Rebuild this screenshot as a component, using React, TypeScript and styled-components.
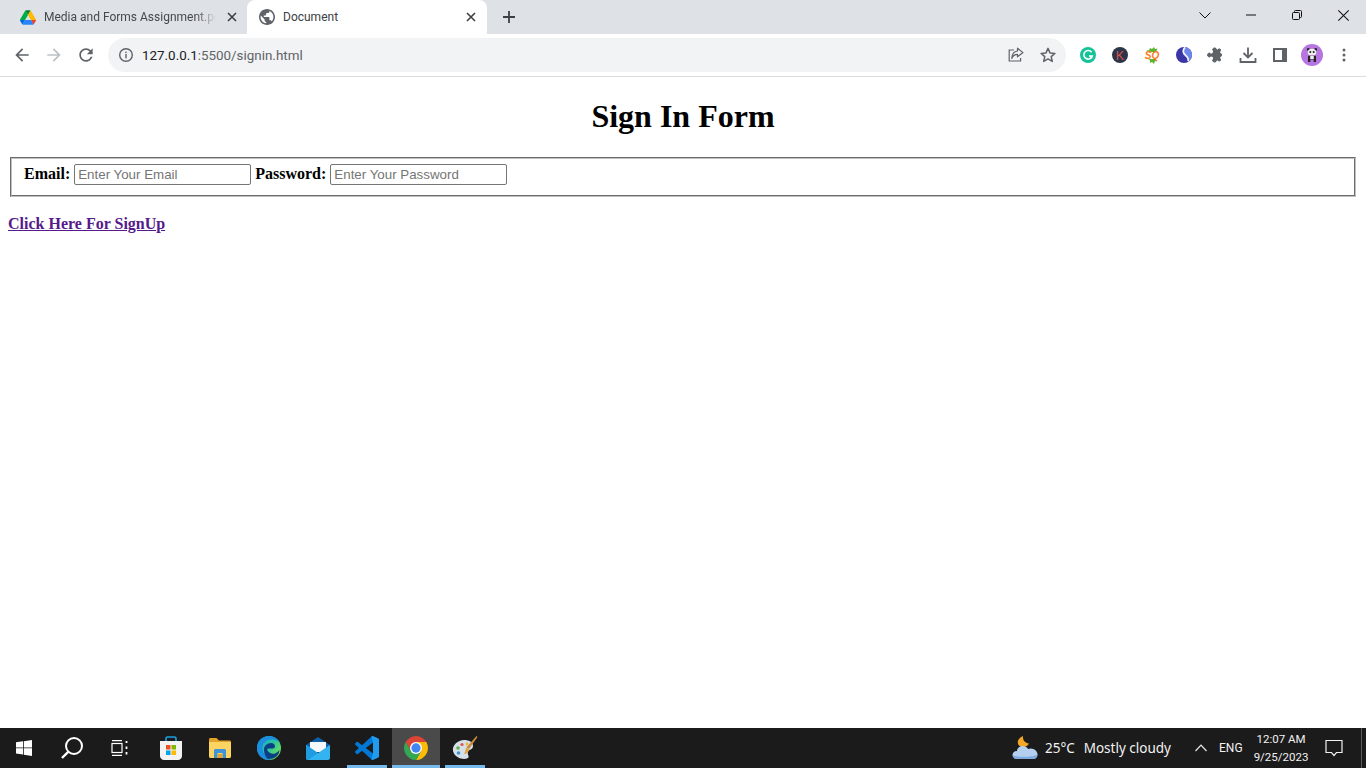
import React from "react";
import styled, { createGlobalStyle } from "styled-components";

const Global = createGlobalStyle`
  html, body { margin: 0; padding: 0; height: 100%; overflow: hidden; background: #fff; }
  #root { height: 100%; }
`;
const UI = `"Noto Sans", "Open Sans", sans-serif`;
const NARROW = `Roboto, "Noto Sans", sans-serif`;

const Shell = styled.div`display: flex; flex-direction: column; height: 768px; width: 1366px;`;
const TabStrip = styled.div`display: flex; align-items: flex-end; height: 34px; background: #dee1e6; padding-left: 8px; flex: none;`;
const Tab = styled.div<{ $active?: boolean }>`
  position: relative; display: flex; align-items: center; height: 34px; flex: none;
  width: ${p => (p.$active ? "240px" : "239px")};
  padding: 0 ${p => (p.$active ? "8px" : "7px")} 0 12px;
  box-sizing: border-box;
  background: ${p => (p.$active ? "#fff" : "transparent")};
  border-radius: 8px 8px 0 0;
  color: ${p => (p.$active ? "#3c4043" : "#45494e")};
  font: 12px ${NARROW};
`;
const TabIcon = styled.span`display: flex; width: 16px; height: 16px; flex: none; margin-right: 8px;`;
const TabTitle = styled.span<{ $fade?: boolean }>`
  flex: 1; white-space: nowrap; overflow: hidden; line-height: 16px; margin-top: -1px;
  ${p => p.$fade && "margin-right: 8px; -webkit-mask-image: linear-gradient(90deg,#000 88%,transparent); mask-image: linear-gradient(90deg,#000 88%,transparent);"}
`;
const TabClose = styled.span`display: flex; width: 16px; height: 16px; align-items: center; justify-content: center; flex: none; color: #3c4043;`;
const NewTab = styled.span`display: flex; width: 28px; height: 28px; margin: 0 0 3px 8px; align-items: center; justify-content: center; color: #3c4043;`;
const WinControls = styled.div`display: flex; margin-left: auto; align-self: flex-start; height: 30px;`;
const WinButton = styled.span`display: flex; width: 46px; height: 30px; align-items: center; justify-content: center; color: #111;`;

const Toolbar = styled.div`display: flex; align-items: center; height: 42px; padding: 0 6px; background: #fff; border-bottom: 1px solid #dadce0; flex: none;`;
const ToolButton = styled.span`display: flex; width: 32px; height: 32px; align-items: center; justify-content: center; flex: none; color: #5f6368;`;
const Omnibox = styled.div`display: flex; align-items: center; flex: 1; height: 34px; margin: 0 6px; padding: 0 2px 0 10px; border-radius: 17px; background: #f1f3f4; font: 13.4px ${NARROW};`;
const InfoSlot = styled.span`display: flex; width: 16px; height: 16px; margin-right: 8px; color: #5f6368;`;
const Url = styled.span`flex: 1; color: #5f6368;`;
const Host = styled.span`color: #202124;`;

const Page = styled.main`flex: 1; padding: 0 8px; background: #fff; font: 16px "Liberation Serif", "Times New Roman", serif; color: #000; overflow: hidden;`;
const Title = styled.h1`margin: 21.44px 0; font-size: 32px; font-weight: bold; text-align: center; line-height: 37px;`;
const Field = styled.fieldset`margin: 0 2px 17px; padding: 4.6px 12px 10px; border: 2px groove #c0c0c0; min-width: 0; height: 40px; box-sizing: border-box; line-height: 22px;`;
const Label = styled.label`font-weight: bold;`;
const TextInput = styled.input`
  width: 177px; height: 21px; box-sizing: border-box; margin: 0; padding: 1px 3px;
  border: 1px solid #767676; border-radius: 2px; font: 13.333px "Liberation Sans", Arial, sans-serif; vertical-align: baseline;
  &::placeholder { color: #757575; opacity: 1; }
`;
const SignUp = styled.a`font-weight: bold; color: #551a8b; text-decoration: underline; line-height: 20px; display: inline-block;`;

const Taskbar = styled.footer`display: flex; align-items: stretch; height: 40px; background: #1b1b1b; flex: none; color: #fff; font: 14px ${UI};`;
const SysSlot = styled.span`display: flex; width: 48px; align-items: center; justify-content: center; flex: none;`;
const AppGroup = styled.div`display: flex; margin-left: 2px;`;
const AppSlot = styled.span<{ $running?: boolean; $active?: boolean }>`
  position: relative; display: flex; width: 49px; align-items: center; justify-content: center; flex: none;
  background: ${p => (p.$active ? "linear-gradient(#4a4a4a,#4a4a4a) right / 48px 100% no-repeat" : "none")};
  &::after {
    content: ""; display: ${p => (p.$running ? "block" : "none")};
    position: absolute; bottom: 0; height: 3px; background: #76b9ed;
    left: ${p => (p.$active ? "1px" : "5px")}; right: ${p => (p.$active ? "0" : "4px")};
  }
`;
const Tray = styled.div`display: flex; align-items: center; margin-left: auto;`;
const Weather = styled.span`display: flex; width: 26px; height: 26px; margin-right: 7px;`;
const Temp = styled.span`font-size: 13.5px; margin-right: 9px; color: #f2f2f2;`;
const Forecast = styled.span`font-size: 13.5px; margin-right: 24px; color: #f2f2f2;`;
const TrayChevron = styled.span`display: flex; margin-right: 12px;`;
const Lang = styled.span`font-size: 12px; width: 24px; color: #f2f2f2; margin-right: 11px; font-family: ${NARROW};`;
const Clock = styled.div`display: flex; flex-direction: column; align-items: center; width: 54px; font: 11.5px/18px ${NARROW}; color: #f2f2f2; white-space: nowrap;`;
const Notify = styled.span`display: flex; width: 52px; justify-content: center; margin-right: 1px;`;
const ShowDesktop = styled.span`width: 1px; height: 40px; background: #5a5a5a; margin-right: 4px;`;
const LogoText = styled.text`font-family: "Liberation Sans", Arial, sans-serif; font-weight: bold;`;

const X = ({ s = 10, w = 1.6 }: { s?: number; w?: number }) => (
  <svg width={s} height={s} viewBox="0 0 10 10"><path d="M1 1l8 8M9 1l-8 8" stroke="currentColor" strokeWidth={w} fill="none" /></svg>
);
const Drive = () => (
  <svg width="16" height="15" viewBox="0 0 87.3 78" style={{ marginTop: 1 }}>
    <path d="m6.6 66.85 3.85 6.65c.8 1.4 1.95 2.5 3.3 3.3l13.75-23.8h-27.5c0 1.55.4 3.1 1.2 4.5z" fill="#0066da" />
    <path d="m43.65 25-13.75-23.8c-1.35.8-2.5 1.9-3.3 3.3l-25.4 44a9.06 9.06 0 0 0 -1.2 4.5h27.5z" fill="#00ac47" />
    <path d="m73.55 76.8c1.35-.8 2.5-1.9 3.3-3.3l1.6-2.75 7.65-13.25c.8-1.4 1.2-2.95 1.2-4.5h-27.502l5.852 11.5z" fill="#ea4335" />
    <path d="m43.65 25 13.75-23.8c-1.35-.8-2.9-1.2-4.5-1.2h-18.5c-1.6 0-3.15.45-4.5 1.2z" fill="#00832d" />
    <path d="m59.8 53h-32.3l-13.75 23.8c1.35.8 2.9 1.2 4.5 1.2h50.8c1.6 0 3.15-.45 4.5-1.2z" fill="#2684fc" />
    <path d="m73.4 26.5-12.7-22c-.8-1.4-1.95-2.5-3.3-3.3l-13.75 23.8 16.15 28h27.45c0-1.55-.4-3.1-1.2-4.5z" fill="#ffba00" />
  </svg>
);
const Globe = () => (
  <svg width="16" height="16" viewBox="2 2 20 20"><path fill="#5f6368" d="M12 2C6.48 2 2 6.48 2 12s4.48 10 10 10 10-4.48 10-10S17.52 2 12 2zm-1 17.93c-3.95-.49-7-3.85-7-7.93 0-.62.08-1.21.21-1.79L9 15v1c0 1.1.9 2 2 2v1.93zm6.9-2.54c-.26-.81-1-1.39-1.9-1.39h-1v-3c0-.55-.45-1-1-1H8v-2h2c.55 0 1-.45 1-1V7h2c1.1 0 2-.9 2-2v-.41c2.93 1.19 5 4.06 5 7.41 0 2.08-.8 3.97-2.1 5.39z" /></svg>
);
const Arrow = ({ flip, color }: { flip?: boolean; color: string }) => (
  <svg width="20" height="20" viewBox="0 0 24 24" style={flip ? { transform: "scaleX(-1)" } : undefined}>
    <path fill={color} d="M20 11H7.83l5.59-5.59L12 4l-8 8 8 8 1.41-1.41L7.83 13H20v-2z" />
  </svg>
);
const Reload = () => (
  <svg width="20" height="20" viewBox="0 0 24 24"><path fill="#5f6368" d="M17.65 6.35C16.2 4.9 14.21 4 12 4c-4.42 0-7.99 3.58-7.99 8s3.57 8 7.99 8c3.73 0 6.84-2.55 7.73-6h-2.08c-.82 2.33-3.04 4-5.65 4-3.31 0-6-2.69-6-6s2.69-6 6-6c1.66 0 3.14.69 4.22 1.78L13 11h7V4l-2.35 2.35z" /></svg>
);
const Info = () => (
  <svg width="16" height="16" viewBox="0 0 16 16"><circle cx="8" cy="8" r="6.3" fill="none" stroke="#5f6368" strokeWidth="1.4" /><rect x="7.3" y="7" width="1.4" height="4.4" fill="#5f6368" /><rect x="7.3" y="4.6" width="1.4" height="1.5" fill="#5f6368" /></svg>
);
const Share = () => (
  <svg width="18" height="18" viewBox="0 0 18 18" fill="none" stroke="#5f6368" strokeWidth="1.2"><path d="M7 4H2.2v11h11.4v-3" /><path d="M10.5 2.2 16 6.6l-5.5 4.2V8.4C8 8.4 6 9.6 4.8 12.4 5 8.6 7.2 5.4 10.5 5z" strokeLinejoin="round" /></svg>
);
const Star = () => (
  <svg width="18" height="18" viewBox="0 0 18 18"><path d="M9 2.4l2 4.5 4.9.5-3.7 3.2 1.1 4.8L9 12.9l-4.3 2.5 1.1-4.8L2.1 7.4 7 6.9z" fill="none" stroke="#5f6368" strokeWidth="1.5" strokeLinejoin="round" /></svg>
);
const Grammarly = () => (
  <svg width="16" height="16" viewBox="0 0 16 16"><circle cx="8" cy="8" r="8" fill="#15c39a" /><path d="M11.6 5.2A4.3 4.3 0 1 0 12.3 9H9" fill="none" stroke="#fff" strokeWidth="1.6" /><path d="M9.6 8.9l2.6 2.4" stroke="#fff" strokeWidth="1.2" /></svg>
);
const KBadge = () => (
  <svg width="16" height="16" viewBox="0 0 16 16"><circle cx="8" cy="8" r="8" fill="#2b3648" /><LogoText x="8" y="12.500" fontSize="12.500" textAnchor="middle" fill="#d9534f" style={{ fontWeight: 400 }}>K</LogoText></svg>
);
const SQ = () => (
  <svg width="18" height="18" viewBox="0 0 18 18">
    <path d="M4 4l2 .5L7 2l2 1 2-2 1 2 2.500-.5L13 6H5zM5 13l2 1v3l2-1 2 2 1-3 2 .5L13 13z" fill="#5cb531" />
    <LogoText x="9" y="13" fontSize="10" textAnchor="middle" fill="#ff7a1a" style={{ fontStyle: "italic" }}>SQ</LogoText>
  </svg>
);
const Simplenote = () => (
  <svg width="16" height="16" viewBox="0 0 16 16">
    <circle cx="8" cy="8" r="8" fill="#3a36a8" />
    <path d="M9 .1A8 8 0 0 1 16 8c0 2.500-1 4.500-3 6 .7-3-1-4.500-3-6S7 3 9 .1z" fill="#6d86ea" />
    <path d="M9 .3C6.500 3 6.800 6 9.300 8c2.300 1.800 3.700 3.300 2.900 6.300" fill="none" stroke="#f2f5ff" strokeWidth="1.800" />
  </svg>
);
const Puzzle = () => (
  <svg width="18" height="18" viewBox="0 0 24 24" style={{ transform: "rotate(45deg) scale(.9)" }}><path fill="#5f6368" d="M20.5 11H19V7c0-1.100-.9-2-2-2h-4V3.500C13 2.120 11.880 1 10.500 1S8 2.120 8 3.500V5H4c-1.100 0-1.990.9-1.990 2v3.800H3.500c1.490 0 2.700 1.210 2.700 2.700s-1.210 2.700-2.700 2.700H2V20c0 1.100.9 2 2 2h3.800v-1.500c0-1.490 1.210-2.700 2.700-2.700 1.490 0 2.700 1.210 2.700 2.700V22H17c1.100 0 2-.9 2-2v-4h1.500c1.380 0 2.500-1.120 2.500-2.500S21.880 11 20.500 11z" /></svg>
);
const Download = () => (
  <svg width="18" height="18" viewBox="0 0 18 18" fill="none" stroke="#5f6368" strokeWidth="1.8"><path d="M9 1.500v9.500M4.500 7l4.500 4.500L13.500 7" /><path d="M1.500 12v4h15v-4" /></svg>
);
const SidePanel = () => (
  <svg width="16" height="16" viewBox="0 0 16 16"><rect x="1" y="1" width="14" height="14" fill="#5f6368" /><rect x="3" y="3" width="7" height="10" fill="#fff" /></svg>
);
const Avatar = () => (
  <svg width="22" height="22" viewBox="0 0 22 22">
    <circle cx="11" cy="11" r="11" fill="#b675e0" />
    <circle cx="7.300" cy="5.500" r="1.400" fill="#222" /><circle cx="14.700" cy="5.500" r="1.400" fill="#222" />
    <ellipse cx="11" cy="8.300" rx="4.300" ry="3.500" fill="#eee" />
    <circle cx="9.300" cy="8" r="1" fill="#222" /><circle cx="12.700" cy="8" r="1" fill="#222" />
    <path d="M7 11.800h8V18h-2.300v-2.500h-3.400V18H7z" fill="#222" />
    <rect x="9.200" y="12" width="3.600" height="3" fill="#eee" />
  </svg>
);
const Dots = () => (
  <svg width="16" height="16" viewBox="0 0 16 16"><circle cx="8" cy="3" r="1.500" fill="#5f6368" /><circle cx="8" cy="8" r="1.500" fill="#5f6368" /><circle cx="8" cy="13" r="1.500" fill="#5f6368" /></svg>
);

const WinLogo = () => (
  <svg width="16" height="16" viewBox="0 0 16 16"><path fill="#fff" d="M0 2.300 7 1.300V7.500H0zM7.800 1.200 16 0v7.500H7.800zM0 8.300h7v6.300l-7-1zM7.800 8.300H16V16l-8.200-1.200z" /></svg>
);
const Search = () => (
  <svg width="24" height="24" viewBox="0 0 24 24" fill="none" stroke="#fff" strokeWidth="2"><circle cx="14" cy="10" r="8" /><path d="M8.200 15.800 2 22" strokeWidth="2.400" /></svg>
);
const TaskView = () => (
  <svg width="18" height="16" viewBox="0 0 18 16" fill="none" stroke="#fff" strokeWidth="1.200"><path d="M1 .6h10M1 15.400h10" /><rect x="1" y="3.500" width="10" height="9" /><path d="M15.500 1v2M15.500 6.500v2.500M15.500 12v2.500" strokeWidth="1.800" /></svg>
);
const Store = () => (
  <svg width="24" height="24" viewBox="0 0 24 24">
    <path d="M7 6V2.500C7 1.500 7.700 1 8.500 1h7c.8 0 1.500.5 1.500 1.500V6" fill="none" stroke="#1ba1e2" strokeWidth="1.600" />
    <path d="M1 5h22v15c0 2.200-1.800 4-4 4H5c-2.200 0-4-1.800-4-4z" fill="#f3f3f3" />
    <rect x="7" y="9" width="4.500" height="4.500" fill="#f25022" /><rect x="12.500" y="9" width="4.500" height="4.500" fill="#7fba00" />
    <rect x="7" y="14.500" width="4.500" height="4.500" fill="#00a4ef" /><rect x="12.500" y="14.500" width="4.500" height="4.500" fill="#ffb900" />
  </svg>
);
const Files = () => (
  <svg width="22" height="20" viewBox="0 0 22 20">
    <path d="M0 1.500C0 .7.700 0 1.500 0h6l2.500 2.500h10.500c.8 0 1.500.7 1.500 1.500v3H0z" fill="#e2a32b" />
    <path d="M0 4h22v14.500c0 .8-.7 1.500-1.500 1.500h-19C.7 20 0 19.300 0 18.500z" fill="#fcd462" />
    <path d="M5 20v-7.500C5 11.700 5.700 11 6.500 11h9c.8 0 1.500.7 1.500 1.500V20h-3.500v-5h-5v5z" fill="#3f93d8" />
    <rect x="8.500" y="16" width="5" height="4" fill="#e2a32b" />
  </svg>
);
const Edge = () => (
  <svg width="24" height="24" viewBox="0 0 24 24">
    <defs>
      <linearGradient id="eg" x1="0" y1="0" x2="1" y2=".8"><stop offset="0" stopColor="#1aa0d8" /><stop offset=".55" stopColor="#2cc5a0" /><stop offset="1" stopColor="#7be04f" /></linearGradient>
    </defs>
    <circle cx="12" cy="12" r="12" fill="url(#eg)" />
    <path d="M0 12C0 5 5 0 12 0c5 0 9 3 10.500 6.500C19 3 12 2.500 8 6c-3 2.700-3 6-2 9 1.300 4 4.500 7.500 8.500 8.800C6 25 0 19 0 12z" fill="#1b8ee0" />
    <path d="M7 13.500c0-3.500 3-6.500 7-6.500 2.500 0 4 1.300 4 3.300 0 1.300-1 2.200-2.200 2.200h-4.500c-1 0-1.300 1-.8 2 1.300 2.700 5 4 8 2.700 1.500-.7 3-1.800 4-3.200-.5 5.500-5 9-10 8.800C10 24 7 19 7 13.500z" fill="#0b3f86" />
  </svg>
);
const Mail = () => (
  <svg width="24" height="24" viewBox="0 0 24 24">
    <path d="M12 1 24 9v3H0V9z" fill="#0c5fa8" />
    <path d="M4 6h16v10H4z" fill="#f4f8fc" />
    <path d="M0 9l12 8 12-8v13c0 1-.8 2-2 2H2c-1.200 0-2-1-2-2z" fill="#33b4f0" />
    <path d="M12 17 0 9v13c0 1 .8 2 2 2z" fill="#1f9be0" />
  </svg>
);
const VSCode = () => (
  <svg width="24" height="24" viewBox="0 0 100 100">
    <path fillRule="evenodd" fill="#0078d4" d="M70.900 99.300a6.200 6.200 0 0 0 5-.2l20.600-9.900a6.300 6.300 0 0 0 3.500-5.600V16.400a6.300 6.300 0 0 0-3.500-5.600L75.900.9a6.200 6.200 0 0 0-7.100 1.200L29.400 38.100 12.200 25.100a4.200 4.200 0 0 0-5.300.2L1.400 30.300a4.200 4.200 0 0 0 0 6.200L16.300 50 1.400 63.500a4.200 4.200 0 0 0 0 6.200l5.500 5a4.200 4.200 0 0 0 5.300.2l17.200-13 39.400 36a6.200 6.200 0 0 0 2.100 1.400zM75 27.300 45.100 50 75 72.700V27.300z" />
    <path fill="#1f9cf0" d="M75.900.9l20.600 9.900a6.300 6.300 0 0 1 3.500 5.600v67.200a6.300 6.300 0 0 1-3.500 5.600l-20.600 9.900a6.200 6.200 0 0 1-7.100-1.200L75 72.700V27.300L68.800 2.100A6.200 6.200 0 0 1 75.900.9z" />
  </svg>
);
const Chrome = () => (
  <svg width="24" height="24" viewBox="2 2 44 44">
    <path d="M5 13A22 22 0 0 1 43 13H24L14.500 29.500z" fill="#db4437" />
    <path d="M43 13A22 22 0 0 1 24 46L33.500 29.500 24 13z" fill="#fbbc05" />
    <path d="M5 13A22 22 0 0 0 24 46L33.500 29.500H14.500z" fill="#34a853" />
    <circle cx="24" cy="24" r="11" fill="#fff" /><circle cx="24" cy="24" r="8.500" fill="#4285f4" />
  </svg>
);
const Paint = () => (
  <svg width="26" height="24" viewBox="0 0 26 24">
    <path d="M1 15C0 9 6 4 12 4c5 0 9 2 9 6s-4 3-5 6 2 4 0 6c-3 2-13 1-15-7z" fill="#d5e0e8" />
    <circle cx="6" cy="12" r="1.800" fill="#5fb14a" /><circle cx="10" cy="8.500" r="1.600" fill="#e2574c" /><circle cx="15" cy="8" r="1.400" fill="#f2b632" /><circle cx="6.500" cy="17" r="1.800" fill="#3f93d8" />
    <path d="M24.500 0l1 1-8.500 12-2.500-1.800z" fill="#c98a3c" />
    <path d="M14.500 11.500l2.500 1.800c-.5 3-2.500 4.700-5 4.700 1.500-1.500 1-4.800 2.500-6.500z" fill="#e9a23b" />
  </svg>
);
const Cloud = () => (
  <svg width="26" height="26" viewBox="0 0 26 26">
    <path d="M11 1c-.5 3.500 1.500 7 6 7.500-1.500 3-5 4.500-8.500 3C5 10 4 4 11 1z" fill="#f4a626" />
    <path d="M5 24c-6 0-6-8 0-8 .5-5 8-7 11-2 5-2 10 2 9.500 6-.3 2.500-2 4-4.500 4z" fill="#b4d0f0" />
    <path d="M.5 20c3 2.500 20 2.500 25-.5-.3 2.500-2 4.500-4.500 4.500H5C2.500 24 1 22 .5 20z" fill="#7fabdf" />
  </svg>
);
const Chevron = () => (
  <svg width="12" height="8" viewBox="0 0 12 8" fill="none" stroke="#e8e8e8" strokeWidth="1.200"><path d="M.5 7 6 1.200 11.500 7" /></svg>
);
const Bubble = () => (
  <svg width="18" height="18" viewBox="0 0 18 18" fill="none" stroke="#f2f2f2" strokeWidth="1.200"><path d="M1 1.500h16v12h-5.500L9 16.500l-2.500-3H1z" /></svg>
);

export default function App() {
  return (
    <Shell>
      <Global />
      <TabStrip>
        <Tab>
          <TabIcon><Drive /></TabIcon>
          <TabTitle $fade>Media and Forms Assignment.pdf</TabTitle>
          <TabClose><X /></TabClose>
        </Tab>
        <Tab $active>
          <TabIcon><Globe /></TabIcon>
          <TabTitle>Document</TabTitle>
          <TabClose><X /></TabClose>
        </Tab>
        <NewTab>
          <svg width="14" height="14" viewBox="0 0 14 14"><path d="M7 1v12M1 7h12" stroke="currentColor" strokeWidth="1.800" /></svg>
        </NewTab>
        <WinControls>
          <WinButton><svg width="12" height="7" viewBox="0 0 12 7" fill="none" stroke="currentColor"><path d="M.5.500 6 6l5.500-5.500" /></svg></WinButton>
          <WinButton><svg width="10" height="2" viewBox="0 0 10 2"><path d="M0 1h10" stroke="currentColor" /></svg></WinButton>
          <WinButton><svg width="10" height="10" viewBox="0 0 10 10" fill="none" stroke="currentColor"><rect x=".5" y="2.500" width="7" height="7" rx="1" /><path d="M2.500 2.500V1.500a1 1 0 0 1 1-1h5a1 1 0 0 1 1 1v5a1 1 0 0 1-1 1h-1" /></svg></WinButton>
          <WinButton><X s={13} w={0.8} /></WinButton>
        </WinControls>
      </TabStrip>
      <Toolbar>
        <ToolButton><Arrow color="#5f6368" /></ToolButton>
        <ToolButton><Arrow flip color="#bdc1c6" /></ToolButton>
        <ToolButton><Reload /></ToolButton>
        <Omnibox>
          <InfoSlot><Info /></InfoSlot>
          <Url><Host>127.0.0.1</Host>:5500/signin.html</Url>
          <ToolButton><Share /></ToolButton>
          <ToolButton><Star /></ToolButton>
        </Omnibox>
        <ToolButton><Grammarly /></ToolButton>
        <ToolButton><KBadge /></ToolButton>
        <ToolButton><SQ /></ToolButton>
        <ToolButton><Simplenote /></ToolButton>
        <ToolButton><Puzzle /></ToolButton>
        <ToolButton><Download /></ToolButton>
        <ToolButton><SidePanel /></ToolButton>
        <ToolButton><Avatar /></ToolButton>
        <ToolButton><Dots /></ToolButton>
      </Toolbar>
      <Page>
        <Title>Sign In Form</Title>
        <Field>
          <Label>Email:</Label> <TextInput type="email" placeholder="Enter Your Email" />{" "}
          <Label>Password:</Label> <TextInput type="password" placeholder="Enter Your Password" />
        </Field>
        <SignUp href="#">Click Here For SignUp</SignUp>
      </Page>
      <Taskbar>
        <SysSlot><WinLogo /></SysSlot>
        <SysSlot><Search /></SysSlot>
        <SysSlot><TaskView /></SysSlot>
        <AppGroup>
          <AppSlot><Store /></AppSlot>
          <AppSlot><Files /></AppSlot>
          <AppSlot><Edge /></AppSlot>
          <AppSlot><Mail /></AppSlot>
          <AppSlot $running><VSCode /></AppSlot>
          <AppSlot $running $active><Chrome /></AppSlot>
          <AppSlot $running><Paint /></AppSlot>
        </AppGroup>
        <Tray>
          <Weather><Cloud /></Weather>
          <Temp>25°C</Temp>
          <Forecast>Mostly cloudy</Forecast>
          <TrayChevron><Chevron /></TrayChevron>
          <Lang>ENG</Lang>
          <Clock><span>12:07 AM</span><span>9/25/2023</span></Clock>
          <Notify><Bubble /></Notify>
          <ShowDesktop />
        </Tray>
      </Taskbar>
    </Shell>
  );
}
